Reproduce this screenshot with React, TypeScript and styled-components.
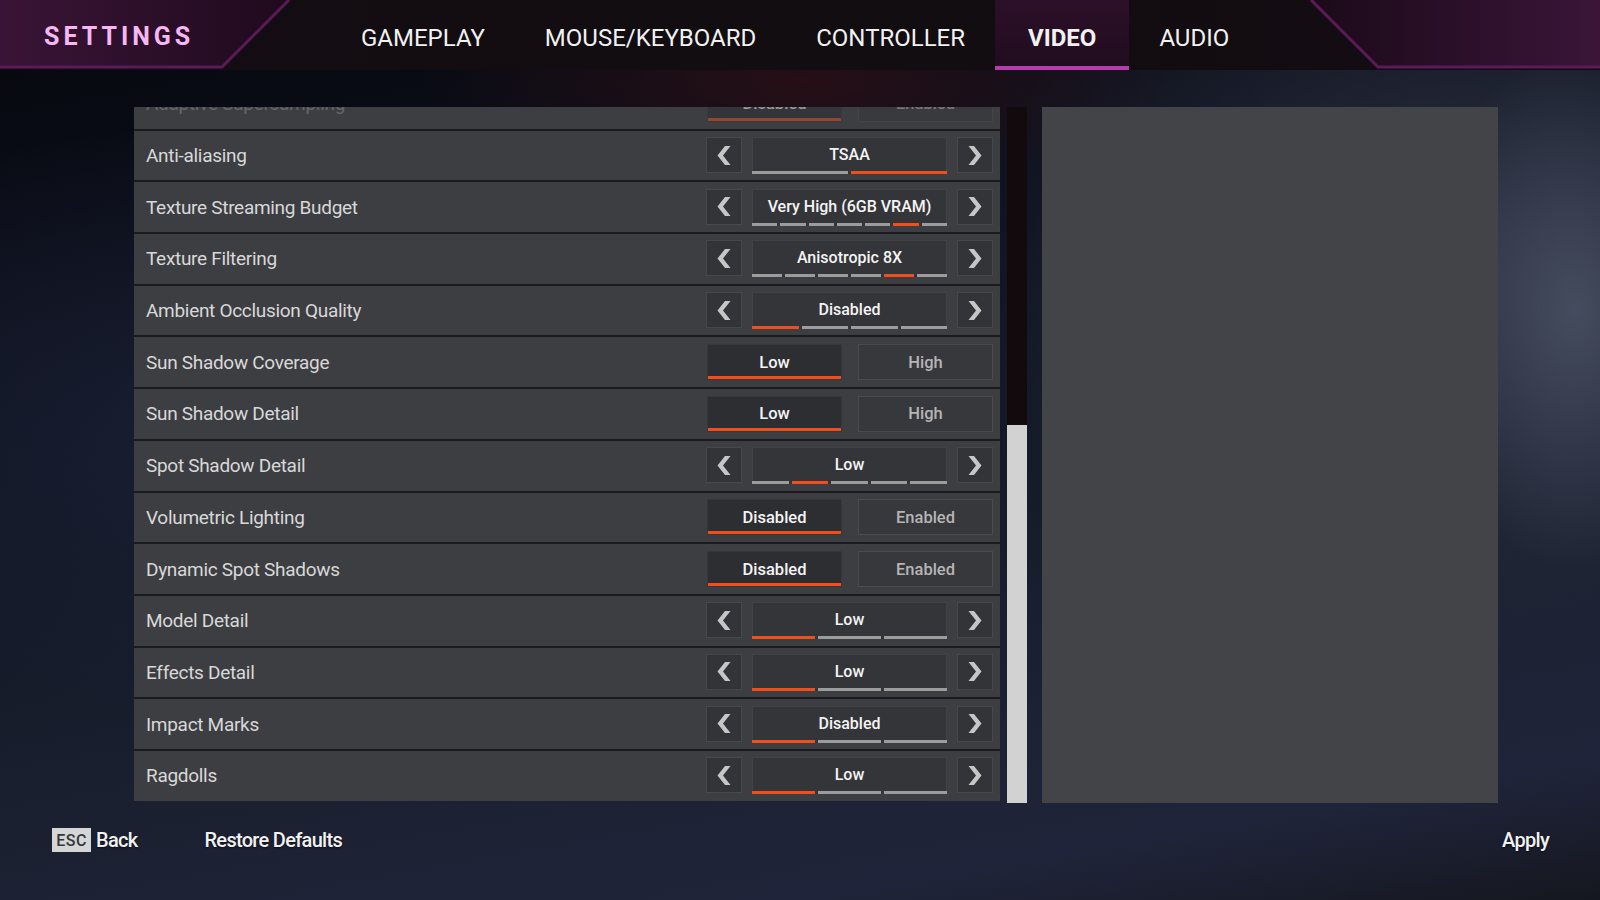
import React, { useLayoutEffect, useRef } from 'react';
import styled, { createGlobalStyle } from 'styled-components';

type Setting =
  | { label: string; type: 'toggle'; options: [string, string]; selected: number }
  | { label: string; type: 'cycle'; value: string; steps: number; selected: number };

const settings: Setting[] = [
  { label: 'Adaptive Supersampling', type: 'toggle', options: ['Disabled', 'Enabled'], selected: 0 },
  { label: 'Anti-aliasing', type: 'cycle', value: 'TSAA', steps: 2, selected: 1 },
  { label: 'Texture Streaming Budget', type: 'cycle', value: 'Very High (6GB VRAM)', steps: 7, selected: 5 },
  { label: 'Texture Filtering', type: 'cycle', value: 'Anisotropic 8X', steps: 6, selected: 4 },
  { label: 'Ambient Occlusion Quality', type: 'cycle', value: 'Disabled', steps: 4, selected: 0 },
  { label: 'Sun Shadow Coverage', type: 'toggle', options: ['Low', 'High'], selected: 0 },
  { label: 'Sun Shadow Detail', type: 'toggle', options: ['Low', 'High'], selected: 0 },
  { label: 'Spot Shadow Detail', type: 'cycle', value: 'Low', steps: 5, selected: 1 },
  { label: 'Volumetric Lighting', type: 'toggle', options: ['Disabled', 'Enabled'], selected: 0 },
  { label: 'Dynamic Spot Shadows', type: 'toggle', options: ['Disabled', 'Enabled'], selected: 0 },
  { label: 'Model Detail', type: 'cycle', value: 'Low', steps: 3, selected: 0 },
  { label: 'Effects Detail', type: 'cycle', value: 'Low', steps: 3, selected: 0 },
  { label: 'Impact Marks', type: 'cycle', value: 'Disabled', steps: 3, selected: 0 },
  { label: 'Ragdolls', type: 'cycle', value: 'Low', steps: 3, selected: 0 },
];

const tabs = ['GAMEPLAY', 'MOUSE/KEYBOARD', 'CONTROLLER', 'VIDEO', 'AUDIO'];

const Chevron: React.FC<{ dir: 'left' | 'right' }> = ({ dir }) => (
  <svg width="14" height="19" viewBox="0 0 14 19">
    <polygon
      points={dir === 'left' ? '8,0 13.5,0 6,9.5 13.5,19 8,19 0.5,9.5' : '6,0 0.5,0 8,9.5 0.5,19 6,19 13.5,9.5'}
      fill="#c6c6c6"
    />
  </svg>
);

const HeaderArt = () => (
  <ArtLayer viewBox="0 0 1600 70" preserveAspectRatio="none">
    <defs>
      <linearGradient id="leftGlow" x1="0" x2="1" y1="0" y2="0">
        <stop offset="0" stopColor="#3a1436" />
        <stop offset="1" stopColor="#1f0a1d" />
      </linearGradient>
      <linearGradient id="rightGlow" x1="0" x2="1" y1="0" y2="0">
        <stop offset="0" stopColor="#1b0a19" />
        <stop offset="1" stopColor="#3a1538" />
      </linearGradient>
    </defs>
    <polygon points="0,0 289,0 222,67 0,67" fill="url(#leftGlow)" />
    <polyline points="289,0 222,67 0,67" fill="none" stroke="#5b1b59" strokeWidth="3" />
    <polygon points="1311,0 1600,0 1600,67 1378,67" fill="url(#rightGlow)" />
    <polyline points="1311,0 1378,67 1600,67" fill="none" stroke="#5b1b59" strokeWidth="3" />
  </ArtLayer>
);

const SettingRow: React.FC<{ setting: Setting; faded?: boolean }> = ({ setting, faded }) => (
  <Row>
    <Label $faded={faded}>{setting.label}</Label>
    <Controls $faded={faded}>
      {setting.type === 'toggle' ? (
        <ToggleGroup>
          {setting.options.map((opt, i) => (
            <ToggleButton key={opt} $active={i === setting.selected}>
              {opt}
            </ToggleButton>
          ))}
        </ToggleGroup>
      ) : (
        <Cycle>
          <ArrowButton>
            <Chevron dir="left" />
          </ArrowButton>
          <ValueBox>
            <ValueText>{setting.value}</ValueText>
            <Steps>
              {Array.from({ length: setting.steps }).map((_, i) => (
                <Step key={i} $active={i === setting.selected} />
              ))}
            </Steps>
          </ValueBox>
          <ArrowButton>
            <Chevron dir="right" />
          </ArrowButton>
        </Cycle>
      )}
    </Controls>
  </Row>
);

export default function App() {
  const listRef = useRef<HTMLDivElement>(null);

  // the list is scrolled a little, so the first row is half hidden
  useLayoutEffect(() => {
    if (listRef.current) listRef.current.scrollTop = 29;
  }, []);

  return (
    <>
      <GlobalStyle />
      <Screen>
        <Header>
          <HeaderArt />
          <Brand>SETTINGS</Brand>
          <TabBar>
            {tabs.map((t) => (
              <Tab key={t} $active={t === 'VIDEO'}>
                {t}
              </Tab>
            ))}
          </TabBar>
        </Header>

        <Body>
          <ListViewport ref={listRef}>
            <List>
              {settings.map((s, i) => (
                <SettingRow key={s.label} setting={s} faded={i === 0} />
              ))}
            </List>
          </ListViewport>
          <ScrollTrack>
            <ScrollThumb />
          </ScrollTrack>
          <InfoPanel />
        </Body>

        <Footer>
          <FooterAction>
            <KeyCap>ESC</KeyCap>
            Back
          </FooterAction>
          <FooterAction>Restore Defaults</FooterAction>
          <FooterAction $right>Apply</FooterAction>
        </Footer>
      </Screen>
    </>
  );
}

const GlobalStyle = createGlobalStyle`
  html, body {
    margin: 0;
    padding: 0;
  }
  body {
    width: 1600px;
    height: 900px;
    overflow: hidden;
    background: #0b0d14;
    font-family: Roboto, "Liberation Sans", sans-serif;
  }
  * {
    box-sizing: border-box;
  }
`;

const Screen = styled.div`
  width: 1600px;
  height: 900px;
  display: flex;
  flex-direction: column;
  overflow: hidden;
  background:
    radial-gradient(ellipse 160px 260px at 1575px 310px, rgba(95, 104, 124, 0.55), transparent),
    radial-gradient(ellipse 380px 110px at 800px 80px, rgba(50, 16, 22, 0.7), transparent),
    radial-gradient(ellipse 500px 400px at 1450px 250px, rgba(60, 66, 84, 0.6), transparent),
    radial-gradient(ellipse 700px 300px at 300px 420px, rgba(34, 40, 64, 0.55), transparent),
    linear-gradient(170deg, #06070d 0%, #0e1220 35%, #1b2030 70%, #20243a 88%, #15171f 100%);
`;

const Header = styled.header`
  position: relative;
  height: 70px;
  display: flex;
  align-items: stretch;
  background: linear-gradient(90deg, #150c13 0%, #110d10 50%, #140c13 100%);
`;

const ArtLayer = styled.svg`
  position: absolute;
  inset: 0;
  width: 1600px;
  height: 70px;
`;

const Brand = styled.div`
  position: relative;
  width: 331px;
  padding: 2px 0 0 44px;
  display: flex;
  align-items: center;
  color: #f5b8f3;
  font-family: Roboto, sans-serif;
  font-weight: 700;
  font-size: 25px;
  letter-spacing: 4px;
`;

const TabBar = styled.nav`
  position: relative;
  display: flex;
`;

const Tab = styled.div<{ $active?: boolean }>`
  display: flex;
  align-items: center;
  padding: ${(p) => (p.$active ? '6px 33px 0' : '6px 30px 0')};
  font-family: Roboto, sans-serif;
  font-size: 24px;
  font-weight: ${(p) => (p.$active ? 700 : 400)};
  color: #f1f1f1;
  background: ${(p) => (p.$active ? 'linear-gradient(180deg, #2c1029 0%, #200c1e 100%)' : 'transparent')};
  box-shadow: ${(p) => (p.$active ? 'inset 0 -4px 0 #b43cac' : 'none')};
`;

const Body = styled.main`
  display: flex;
  align-items: flex-start;
  padding: 37px 0 0 134px;
`;

const ListViewport = styled.div`
  width: 866px;
  height: 694px;
  overflow: hidden;
  background: #1c1a1e;
`;

const List = styled.div`
  display: flex;
  flex-direction: column;
  gap: 2px;
`;

const Row = styled.div`
  height: 49.7px;
  flex: 0 0 auto;
  display: flex;
  align-items: center;
  justify-content: space-between;
  padding: 0 7px 0 12px;
  background: #3d3e42;
`;

const Label = styled.span<{ $faded?: boolean }>`
  color: #d8d8d8;
  font-size: 19px;
  letter-spacing: -0.3px;
  opacity: ${(p) => (p.$faded ? 0.25 : 1)};
`;

const Controls = styled.div<{ $faded?: boolean }>`
  display: flex;
  opacity: ${(p) => (p.$faded ? 0.5 : 1)};
`;

const ToggleGroup = styled.div`
  display: flex;
  gap: 16px;
`;

const ToggleButton = styled.div<{ $active?: boolean }>`
  width: 135px;
  height: 36px;
  display: flex;
  align-items: center;
  justify-content: center;
  font-size: 16.5px;
  font-weight: 500;
  color: ${(p) => (p.$active ? '#f4f4f4' : '#b5b5b5')};
  background: ${(p) => (p.$active ? '#2d2e32' : '#37383c')};
  border: 1px solid ${(p) => (p.$active ? '#36373b' : '#4a4b4f')};
  box-shadow: ${(p) => (p.$active ? 'inset 0 -3px 0 #f04e1c' : 'none')};
`;

const Cycle = styled.div`
  display: flex;
  gap: 10px;
`;

const ArrowButton = styled.div`
  width: 36px;
  height: 36px;
  display: flex;
  align-items: center;
  justify-content: center;
  background: #333438;
  border: 1px solid #47484c;
`;

const ValueBox = styled.div`
  width: 195px;
  height: 37px;
  display: flex;
  flex-direction: column;
  background: #343539;
  border: 1px solid #414246;
  border-bottom: none;
`;

const ValueText = styled.span`
  flex: 1;
  display: flex;
  align-items: center;
  justify-content: center;
  color: #f4f4f4;
  font-size: 16px;
  font-weight: 500;
`;

const Steps = styled.div`
  display: flex;
  gap: 3px;
  height: 3px;
  margin: 0 -1px;
`;

const Step = styled.div<{ $active?: boolean }>`
  flex: 1;
  background: ${(p) => (p.$active ? '#f04e1c' : '#9c9c9c')};
`;

const ScrollTrack = styled.div`
  width: 20px;
  height: 696px;
  margin-left: 7px;
  display: flex;
  flex-direction: column;
  justify-content: flex-end;
  background: #130a0d;
`;

const ScrollThumb = styled.div`
  height: 378px;
  background: #d2d2d2;
`;

const InfoPanel = styled.aside`
  width: 456px;
  height: 696px;
  margin-left: 15px;
  background: #434447;
`;

const Footer = styled.footer`
  display: flex;
  align-items: center;
  gap: 67px;
  height: 24px;
  margin-top: 25px;
  padding: 0 51px 0 52px;
`;

const FooterAction = styled.div<{ $right?: boolean }>`
  display: flex;
  align-items: center;
  gap: 5px;
  margin-left: ${(p) => (p.$right ? 'auto' : '0')};
  color: #f2f2f2;
  font-size: 20px;
  font-weight: 500;
  letter-spacing: -0.7px;
  text-shadow: 0 1px 2px rgba(0, 0, 0, 0.6);
`;

const KeyCap = styled.span`
  width: 39px;
  height: 24px;
  display: flex;
  align-items: center;
  justify-content: center;
  background: #d6d6d6;
  color: #35363a;
  font-size: 16px;
  font-weight: 500;
  letter-spacing: 0.5px;
  text-shadow: none;
`;
